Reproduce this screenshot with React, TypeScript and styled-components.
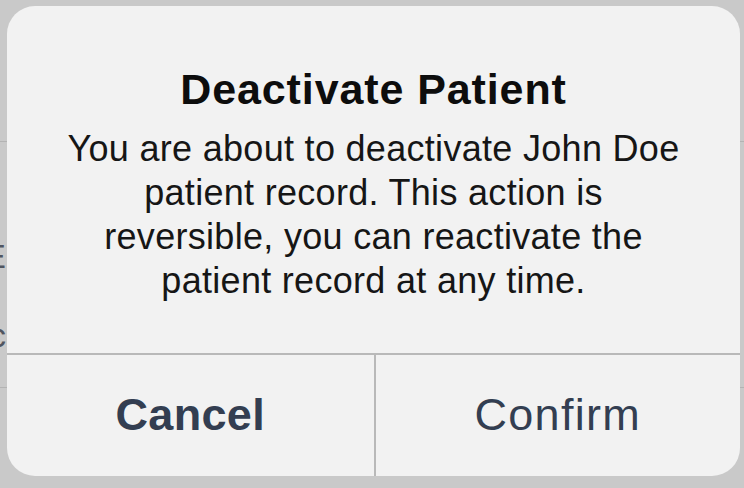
import styled, { createGlobalStyle } from 'styled-components';

const GlobalStyle = createGlobalStyle`
    html, body {
        margin: 0;
        padding: 0;
        background: #c9c9c9;
    }
    #root {
        width: 744px;
        height: 488px;
        overflow: hidden;
        position: relative;
    }
`;

const Page = styled.div`
    width: 744px;
    height: 488px;
    position: relative;
    overflow: hidden;
    background: #c9c9c9;
    font-family: "Liberation Sans", Arial, sans-serif;
`;

// list behind the alert, only a few slivers of it show
const Backdrop = styled.div`
    display: flex;
    flex-direction: column;
    margin-top: -34px;
`;

const BackRow = styled.div<{ $h: number; $line?: boolean }>`
    height: ${p => p.$h}px;
    flex-shrink: 0;
    display: flex;
    align-items: center;
    border-bottom: ${p => (p.$line ? '1px solid #b3b3b3' : 'none')};
`;

const BackLabel = styled.span<{ $end: number }>`
    width: ${p => p.$end}px;
    text-align: right;
    font-size: 34px;
    color: #505560;
    white-space: nowrap;
    direction: rtl;
`;

const Alert = styled.div`
    position: absolute;
    left: 7px;
    top: 6px;
    width: 733px;
    height: 470px;
    border-radius: 28px;
    background: #f2f2f2;
    display: flex;
    flex-direction: column;
    overflow: hidden;
`;

const Content = styled.div`
    flex: 1;
    padding: 57px 40px 0;
    display: flex;
    flex-direction: column;
    align-items: center;
    text-align: center;
`;

const Title = styled.h2`
    margin: 0;
    font-size: 43px;
    line-height: 52px;
    font-weight: 700;
    letter-spacing: 0.9px;
    color: #0d0d0d;
`;

const Message = styled.p`
    margin: 12px 0 0;
    max-width: 622px;
    font-size: 36px;
    line-height: 44px;
    font-weight: 400;
    letter-spacing: 0.3px;
    color: #161616;
`;

const Actions = styled.div`
    height: 121px;
    border-top: 2px solid #b9b9b9;
    display: grid;
    grid-template-columns: 1fr 1fr;
`;

const ActionButton = styled.button<{ $primary?: boolean }>`
    border: none;
    background: transparent;
    font-family: "Liberation Sans", Arial, sans-serif;
    font-size: 45px;
    font-weight: ${p => (p.$primary ? 700 : 400)};
    letter-spacing: ${p => (p.$primary ? '0.3px' : '1.3px')};
    color: #333e51;
    display: flex;
    align-items: center;
    justify-content: center;
    padding: 0 0 2px;
    & + & {
        border-left: 2px solid #b9b9b9;
    }
`;

const App = () => {
    return (
        <Page>
            <GlobalStyle />
            <Backdrop>
                <BackRow $h={44}>
                    <BackLabel $end={44}>Phone</BackLabel>
                </BackRow>
                <BackRow $h={131} $line />
                <BackRow $h={98} />
                <BackRow $h={32}>
                    <BackLabel $end={6}>E</BackLabel>
                </BackRow>
                <BackRow $h={48} />
                <BackRow $h={30}>
                    <BackLabel $end={6}>c</BackLabel>
                </BackRow>
                <BackRow $h={37} $line />
            </Backdrop>
            <Alert>
                <Content>
                    <Title>Deactivate Patient</Title>
                    <Message>
                        You are about to deactivate John Doe patient record. This action is
                        reversible, you can reactivate the patient record at any time.
                    </Message>
                </Content>
                <Actions>
                    <ActionButton $primary>Cancel</ActionButton>
                    <ActionButton>Confirm</ActionButton>
                </Actions>
            </Alert>
        </Page>
    );
};

export default App;
